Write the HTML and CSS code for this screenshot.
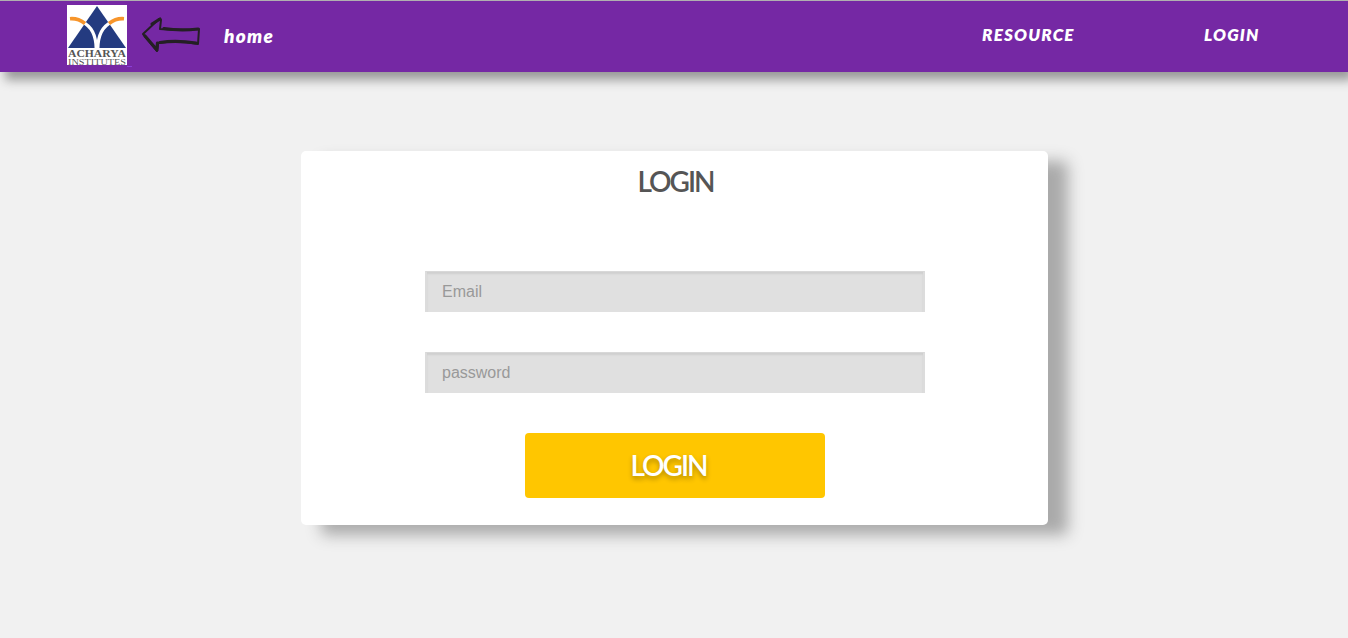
FILE: index.html
```html
<!DOCTYPE html>
<html lang="en">
<head>
<meta charset="utf-8">
<title>Login</title>
<link rel="stylesheet" href="styles.css">
</head>
<body>
<header class="navbar">
  <svg class="logo" viewBox="0 0 60 60" role="img" aria-label="Acharya Institutes">
    <rect width="60" height="60" fill="#fff"/>
    <path d="M30 1 59 43H1Z" fill="#243b80"/>
    <path d="M15 17Q29 23 29.200 44M45 17Q31 23 30.800 44" fill="none" stroke="#fff" stroke-width="3.200"/>
    <path d="M3 13.700Q11 13 18 18.500M57 13.700Q49 13 42 18.500" fill="none" stroke="#f7952b" stroke-width="3.600"/>
    <text class="logo-name" x="1" y="52.300" textLength="58" lengthAdjust="spacingAndGlyphs">ACHARYA</text>
    <text class="logo-sub" x="1" y="59.500" textLength="58" lengthAdjust="spacingAndGlyphs">INSTITUTES</text>
  </svg>
  <span class="link-gap"></span>
  <a class="home" href="#">
    <svg class="arrow" viewBox="0 0 62 40" aria-hidden="true">
      <g fill="none" stroke="#241f24" stroke-linejoin="round" stroke-linecap="round">
        <path d="M3 19 19 4 21 5 20 14Q40 16 59 14L58 29Q38 25 18 28L17 36 3 19" stroke-width="2"/>
        <path d="M5 21 17 35M12 9 20 4M24 13.500Q40 16 58 14M20 27.500Q36 25 56 28M17.500 28 17 34" stroke-width="3.200"/>
      </g>
    </svg>
    <span class="home-text">home</span>
  </a>
  <nav class="links">
    <a class="resource" href="#">RESOURCE</a>
    <a class="signin" href="#">LOGIN</a>
  </nav>
</header>
<main class="content">
  <form class="card">
    <h1 class="title">LOGIN</h1>
    <input class="field" type="email" placeholder="Email">
    <input class="field" type="password" placeholder="password">
    <button class="submit" type="button">LOGIN</button>
  </form>
</main>
</body>
</html>
```
FILE: styles.css
```css
* { box-sizing: border-box; }
body {
  margin: 0;
  height: 638px;
  overflow: hidden;
  background: #f1f1f1;
  font-family: "Liberation Sans", sans-serif;
}
.navbar {
  display: flex;
  height: 72px;
  padding: 4px 0 0 67px;
  border-top: 1px solid #b0b0b0;
  background: #7528a4;
  box-shadow: 5px 8px 10px #999;
}
.logo { width: 60px; height: 60px; }
.logo-name { font: bold 10.500px/1 "Liberation Serif", serif; fill: #555; }
.logo-sub { font: 7.500px/1 "Liberation Serif", serif; fill: #555; }
.link-gap { width: 5px; height: 1px; margin-top: 61px; background: #8a3fd6; }
.home {
  display: flex;
  margin-left: 8px;
  color: #fff;
  text-decoration: none;
}
.arrow { width: 62px; height: 40px; margin-top: 10px; }
.home-text {
  margin: 19px 0 0 22px;
  font: italic 800 19px/24px Lato, sans-serif;
  letter-spacing: 1.300px;
}
.links {
  display: flex;
  gap: 129px;
  margin: 19px 88px 0 auto;
  font: italic 800 17px/22px Lato, sans-serif;
}
.links a { color: #fff; text-decoration: none; white-space: nowrap; }
.resource { width: 93px; letter-spacing: 1.200px; }
.signin { width: 56px; letter-spacing: 1.200px; }
.content { padding-top: 79px; }
.card {
  display: flex;
  flex-direction: column;
  align-items: center;
  width: 747px;
  height: 374px;
  margin-left: 301px;
  padding-top: 12px;
  border-radius: 5px;
  background: #fff;
  box-shadow: 20px 10px 15px #aaa;
}
.title {
  margin: 0 0 72px 2px;
  color: #555;
  font: 600 28px/36px Lato, sans-serif;
  letter-spacing: -2px;
}
.field {
  width: 500px;
  height: 41px;
  margin: 0 0 40px 1px;
  padding: 0 15px;
  border: 2px solid #dcdcdc;
  border-top: 1px solid #d8d8d8;
  border-bottom: 0;
  border-radius: 0;
  background: #e0e0e0;
  box-shadow: inset 0 2px 2px #cfcfcf;
  font: 16px "Liberation Sans", sans-serif;
}
.field::placeholder { color: #999; opacity: 1; }
.submit {
  width: 300px;
  height: 65px;
  margin-left: 1px;
  padding: 0 13px 1px 0;
  border: 0;
  border-radius: 4px;
  background: #ffc600;
  color: #fff;
  font: 600 28px/36px Lato, sans-serif;
  letter-spacing: -2px;
  text-shadow: 0 3px 5px rgba(0, 0, 0, 0.300);
}
```
